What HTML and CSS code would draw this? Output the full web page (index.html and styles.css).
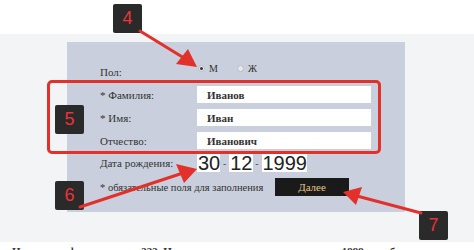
FILE: index.html
```html
<!DOCTYPE html>
<html lang="ru">
<head>
<meta charset="utf-8">
<link rel="stylesheet" href="styles.css">
</head>
<body>
<div class="page">
  <div class="top"></div>
  <div class="band">
    <form class="panel">
      <div class="row row-sex">
        <span class="label">Пол:</span>
        <div class="radios">
          <span class="radio checked"></span><span class="rtext">М</span>
          <span class="radio"></span><span class="rtext">Ж</span>
        </div>
      </div>
      <div class="row">
        <span class="label">* Фамилия:</span>
        <div class="field">Иванов</div>
      </div>
      <div class="row">
        <span class="label">* Имя:</span>
        <div class="field">Иван</div>
      </div>
      <div class="row">
        <span class="label">Отчество:</span>
        <div class="field">Иванович</div>
      </div>
      <div class="row row-date">
        <span class="label">Дата рождения:</span>
        <div class="date">
          <span class="dbox">30</span><span class="dash">-</span><span class="dbox">12</span><span class="dash">-</span><span class="dbox">1999</span>
        </div>
      </div>
      <div class="row row-submit">
        <span class="note">* обязательные поля для заполнения</span>
        <button type="button" class="btn">Далее</button>
      </div>
    </form>
  </div>
  <p class="bottom">Номер телефона указан в 333. Новое значение можно изменить до 1999 в любое время в разделе</p>

  <div class="frame"></div>
  <div class="badge b4">4</div>
  <div class="badge b5">5</div>
  <div class="badge b6">6</div>
  <div class="badge b7">7</div>
  <svg class="arrows" width="474" height="250" viewBox="0 0 474 250">
    <g stroke="#e2302a" stroke-width="3" stroke-linecap="round">
      <line x1="140" y1="31" x2="184" y2="58"/>
      <line x1="80" y1="207" x2="180" y2="174"/>
      <line x1="421" y1="213" x2="357" y2="196"/>
    </g>
    <g fill="#e2302a">
      <polygon points="197,67 176,64 188,49"/>
      <polygon points="197,169 184,183 176,164"/>
      <polygon points="343,192 362,187 356,205"/>
    </g>
  </svg>
</div>
</body>
</html>
```
FILE: styles.css
```css
* { box-sizing: border-box; }
html, body { margin: 0; padding: 0; }
body {
  width: 474px;
  height: 250px;
  overflow: hidden;
  background: #ffffff;
  font-family: "Liberation Serif", "DejaVu Serif", serif;
  color: #2b2b2b;
}
.page {
  position: relative;
  width: 474px;
  height: 250px;
}
.top { height: 34px; }
.band {
  background: #f3f4f6;
  height: 208px;
  padding: 8px 0 0 67px;
}
.panel {
  width: 338px;
  height: 170px;
  background: #c9cfdc;
  padding: 18px 0 0 33px;
  display: flex;
  flex-direction: column;
}
.row {
  display: flex;
  align-items: center;
  height: 17px;
  margin-bottom: 6px;
}
.label {
  width: 97px;
  font-size: 11px;
  color: #333;
}
.row-sex { margin-bottom: 9px; margin-top: 0; }
.row-sex .label { position: relative; top: 3px; }
.radios {
  display: flex;
  align-items: center;
  font-size: 10px;
  color: #333;
}
.radio {
  width: 7px;
  height: 7px;
  border-radius: 50%;
  background: #e6e8ec;
  border: 1px solid #b8bdc6;
  margin: 0 4px 0 1px;
  position: relative;
}
.radio.checked::after {
  content: "";
  position: absolute;
  left: 1px; top: 1px;
  width: 3px; height: 3px;
  border-radius: 50%;
  background: #333;
}
.rtext { margin-right: 18px; }
.field {
  width: 174px;
  height: 17px;
  background: #ffffff;
  font-size: 11px;
  font-weight: bold;
  color: #333;
  padding: 3px 0 0 10px;
  line-height: 12px;
}
.row-date { height: 18px; margin-top: -1px; margin-bottom: 6px; }
.date {
  display: flex;
  align-items: center;
  font-family: "Liberation Sans", Arial, sans-serif;
  color: #222;
}
.dbox {
  background: #ffffff;
  font-size: 20px;
  line-height: 18px;
  height: 18px;
  padding: 0 0 0 1px;
}
.dash {
  font-size: 10px;
  color: #555;
  width: 9px;
  text-align: center;
}
.row-submit { height: 18px; }
.note {
  font-size: 10.5px;
  color: #333;
  width: 175px;
}
.btn {
  width: 74px;
  height: 18px;
  background: #1a1a1a;
  border: none;
  color: #e4c385;
  font-family: "Liberation Serif", serif;
  font-size: 11px;
  padding: 0;
  margin: 0;
}
.bottom {
  margin: 0;
  padding: 3px 0 0 12px;
  font-size: 11px;
  font-weight: bold;
  color: #333;
  white-space: nowrap;
}
.frame {
  position: absolute;
  left: 47px; top: 80px;
  width: 334px; height: 74px;
  border: 3px solid #e2302a;
  border-radius: 5px;
}
.badge {
  position: absolute;
  width: 29px; height: 29px;
  background: #2a2a2b;
  border-radius: 2px;
  color: #e8333a;
  font-family: "Liberation Sans", Arial, sans-serif;
  font-size: 18px;
  display: flex;
  align-items: center;
  justify-content: center;
}
.b4 { left: 113px; top: 4px; }
.b5 { left: 55px; top: 105px; }
.b6 { left: 55px; top: 181px; }
.b7 { left: 419px; top: 211px; }
.arrows {
  position: absolute;
  left: 0; top: 0;
}
```
